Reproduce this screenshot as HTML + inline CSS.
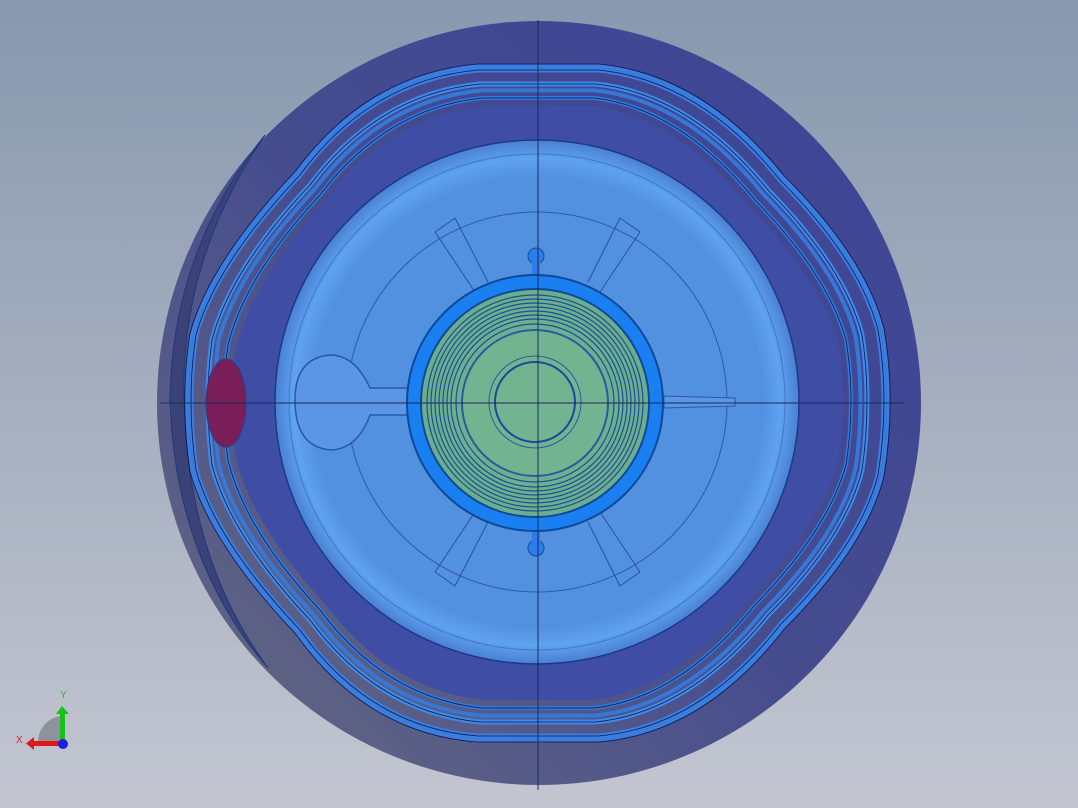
<!DOCTYPE html>
<html><head><style>
html,body{margin:0;padding:0;width:1078px;height:808px;overflow:hidden;}
body{background:linear-gradient(#8898ae,#c3c6d1);}
svg{display:block}
</style></head><body>
<svg width="1078" height="808" viewBox="0 0 1078 808" xmlns="http://www.w3.org/2000/svg">
<defs>
<linearGradient id="outer" x1="1" y1="0" x2="0" y2="1">
<stop offset="0" stop-color="#3c4498"/><stop offset="0.5" stop-color="#454c8e"/><stop offset="1" stop-color="#676a80"/>
</linearGradient>
<radialGradient id="lb" cx="0.5" cy="0.5" r="0.5">
<stop offset="0.86" stop-color="#5290e0"/><stop offset="0.93" stop-color="#5ea2f0"/><stop offset="1" stop-color="#4a80d2"/>
</radialGradient>
<radialGradient id="gr" cx="0.5" cy="0.5" r="0.5">
<stop offset="0" stop-color="#72b490"/><stop offset="1" stop-color="#6cae8c"/>
</radialGradient>
<path id="h1" d="M478 70 L598 70 Q700 80 780 180 Q860 260 878 330 Q890 400 878 475 Q860 545 780 625 Q700 728 598 736 L478 736 Q370 728 300 630 Q215 540 196 470 Q186 400 196 335 Q215 265 300 175 Q370 80 478 70Z"/>
<path id="h2" d="M480 84 L596 84 Q690 94 768 190 Q845 268 862 335 Q872 400 862 470 Q845 538 768 615 Q690 712 596 722 L480 722 Q378 712 310 620 Q230 535 212 465 Q204 400 212 340 Q230 270 310 185 Q378 94 480 84Z"/>
<path id="h3" d="M482 98 L594 98 Q680 108 755 200 Q828 275 846 340 Q856 400 846 465 Q828 530 755 605 Q680 698 594 708 L482 708 Q386 698 320 610 Q245 530 228 460 Q220 400 228 345 Q245 276 320 195 Q386 108 482 98Z"/>
</defs>
<circle cx="539" cy="403" r="382" fill="url(#outer)"/>
<path d="M265 135 Q180 260 184 400 Q188 560 268 668 Q175 560 170 400 Q172 250 265 135Z" fill="#3a4278" stroke="#1c3a80" stroke-width="1"/>
<g fill="none" stroke-linejoin="round">
<use href="#h1" stroke="#3a7ee0" stroke-width="5"/>
<use href="#h1" stroke="#3a7ee0" stroke-width="3" transform="translate(539 403) scale(1.012) translate(-539 -403)"/>
<use href="#h1" stroke="#0a1a50" stroke-width="0.8" transform="translate(539 403) scale(1.018) translate(-539 -403)"/>
<use href="#h1" stroke="#0a1a50" stroke-width="0.8"/>
<use href="#h2" stroke="#3f8ae8" stroke-width="5"/>
<use href="#h2" stroke="#0a1a50" stroke-width="0.8"/>
<use href="#h2" stroke="#3578d8" stroke-width="4" transform="translate(539 403) scale(0.98) translate(-539 -403)"/>
<use href="#h3" stroke="#3278d8" stroke-width="4"/>
<use href="#h3" stroke="#0a1a50" stroke-width="0.8"/>
</g>
<path d="M484 106 L592 106 Q675 116 748 205 Q820 280 838 342 Q848 400 838 462 Q820 525 748 600 Q675 690 592 700 L484 700 Q390 690 326 605 Q252 525 236 458 Q228 400 236 348 Q252 282 326 200 Q390 116 484 106Z" fill="#3f4ea4"/>
<circle cx="537" cy="402" r="262" fill="url(#lb)" stroke="#1a3a88" stroke-width="1.5"/>
<circle cx="537" cy="402" r="248" fill="none" stroke="#3f78c8" stroke-width="1"/>
<circle cx="537" cy="402" r="190" fill="none" stroke="#2c5aa8" stroke-width="1"/>
<g stroke="#2a50a0" stroke-width="1" fill="none">
<path d="M435 232 L475 292 M455 218 L488 282 M640 232 L600 292 M620 218 L588 282 M435 572 L475 512 M455 586 L488 522 M640 572 L600 512 M620 586 L588 522"/>
<path d="M435 232 L455 218 M640 232 L620 218 M435 572 L455 586 M640 572 L620 586"/>
</g>
<path d="M408 388 L370 388 Q355 355 330 355 Q295 358 295 400 Q295 448 332 450 Q358 448 370 415 L408 415Z" fill="#5a96e4" stroke="#2a58a8" stroke-width="1.5"/>
<path d="M664 396 L735 398 L735 406 L664 408Z" fill="#5a96e4" stroke="#2a58a8" stroke-width="1"/>
<circle cx="536" cy="256" r="8" fill="#2a7ee8" stroke="#1a4a98"/>
<rect x="532" y="262" width="8" height="16" fill="#2a7ee8"/>
<circle cx="536" cy="548" r="8" fill="#2a7ee8" stroke="#1a4a98"/>
<rect x="532" y="528" width="8" height="16" fill="#2a7ee8"/>
<circle cx="535" cy="403" r="128" fill="#1a7ff0" stroke="#0f4a98" stroke-width="2"/>
<circle cx="535" cy="403" r="114" fill="url(#gr)" stroke="#0f4a98" stroke-width="2"/>
<g fill="none" stroke="#1a5098" stroke-width="1.2">
<circle cx="535" cy="403" r="108"/><circle cx="535" cy="403" r="104"/><circle cx="535" cy="403" r="100"/>
<circle cx="535" cy="403" r="96"/><circle cx="535" cy="403" r="92"/><circle cx="535" cy="403" r="88"/>
<circle cx="535" cy="403" r="84"/><circle cx="535" cy="403" r="79"/>
</g>
<circle cx="535" cy="403" r="73" fill="#72b490" stroke="#2a5aa0" stroke-width="2"/>
<circle cx="535" cy="402" r="46" fill="none" stroke="#2a5aa0" stroke-width="1"/>
<circle cx="535" cy="402" r="40" fill="#72b490" stroke="#1a4a98" stroke-width="2"/>
<ellipse cx="226" cy="403" rx="20" ry="44" fill="#7a1e5a" stroke="#2a3a88"/>
<g stroke="#1a2a60" stroke-width="1">
<line x1="538" y1="20" x2="538" y2="790"/>
<line x1="160" y1="403" x2="905" y2="403"/>
</g>
<path d="M38 742 A26 26 0 0 1 62 716 L62 742Z" fill="#8e929c"/>
<rect x="60" y="712" width="5" height="30" fill="#18c018"/>
<path d="M56 714 L62 706 L69 714Z" fill="#18c018"/>
<rect x="32" y="741" width="30" height="5" fill="#e01818"/>
<path d="M34 737 L26 743.5 L34 750Z" fill="#e01818"/>
<circle cx="63" cy="744" r="5" fill="#1a20e0"/>
<text x="60" y="698" font-family="Liberation Sans" font-size="10" fill="#20c020">Y</text>
<text x="16" y="743" font-family="Liberation Sans" font-size="10" fill="#e02020">X</text>
</svg>
</body></html>
